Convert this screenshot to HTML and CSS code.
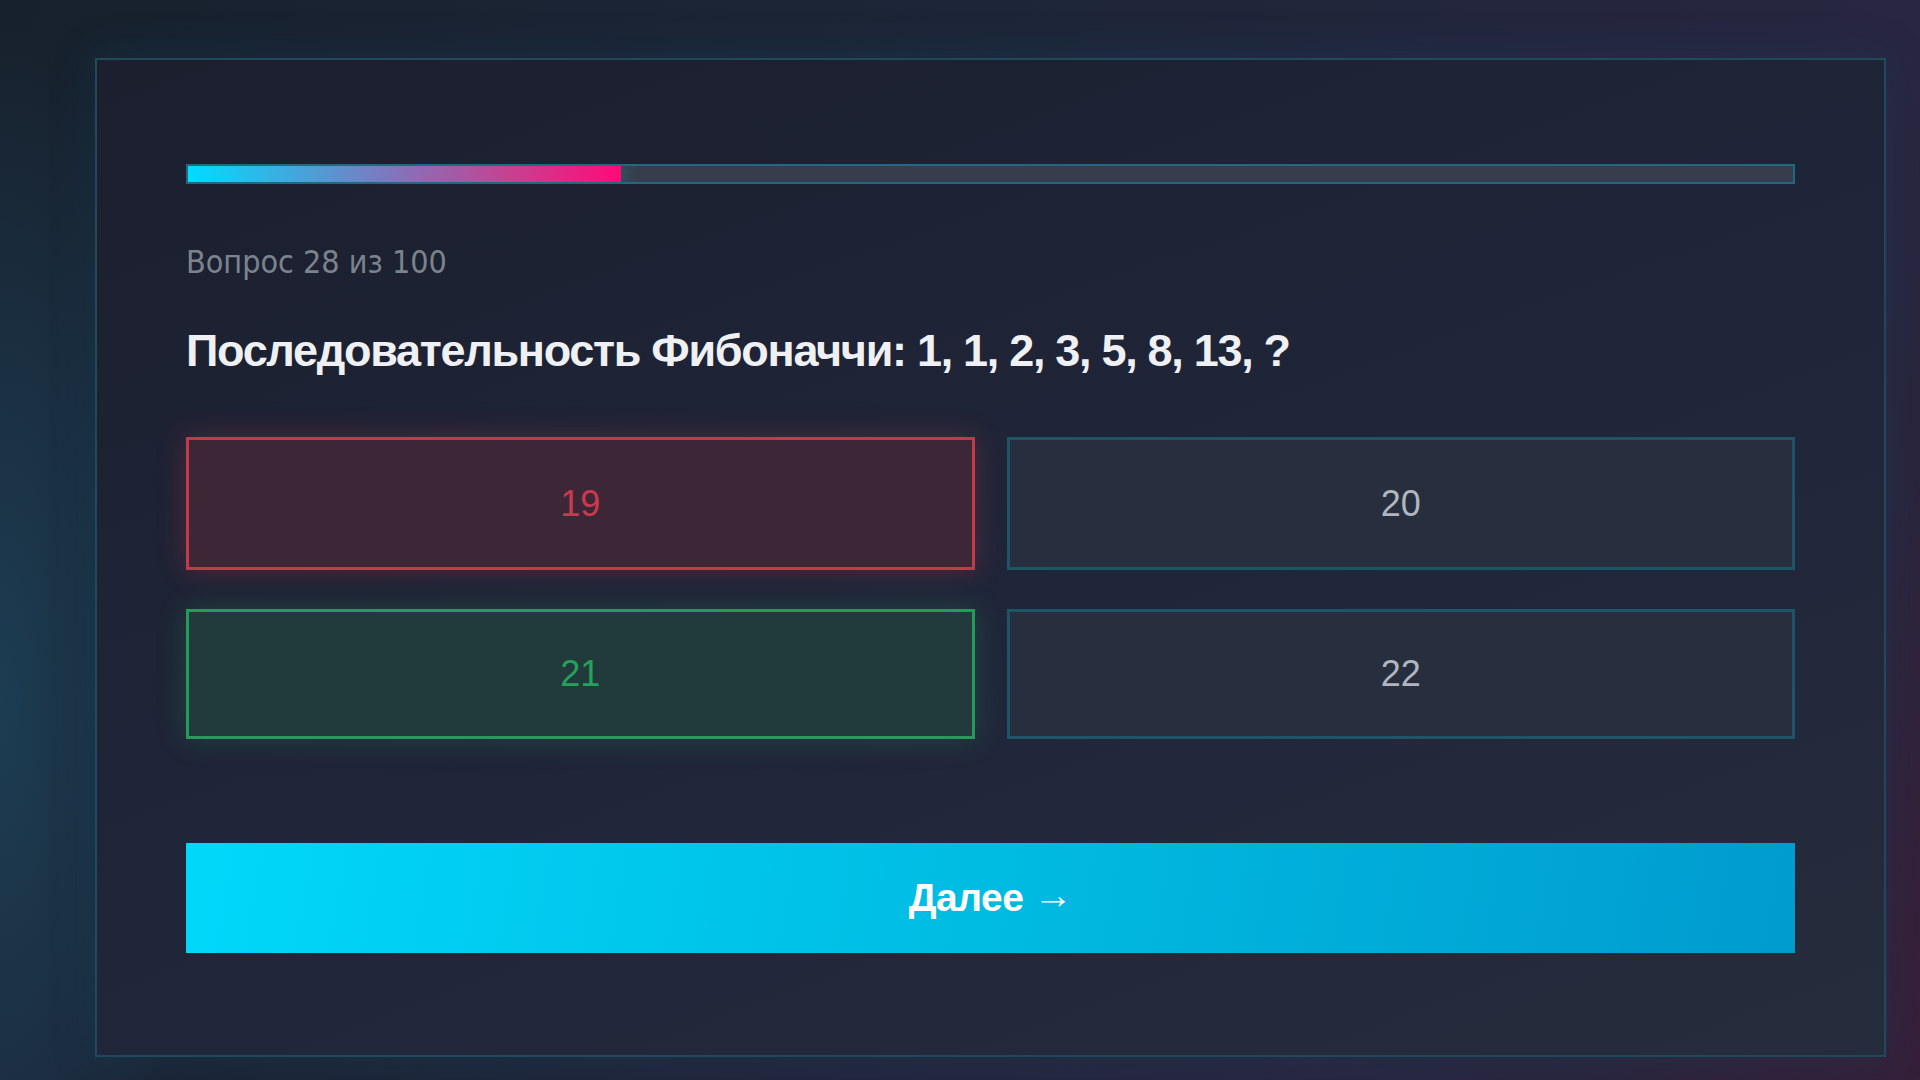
FILE: index.html
```html
<!DOCTYPE html>
<html lang="ru">
<head>
  <meta charset="UTF-8">
  <meta name="viewport" content="width=device-width, initial-scale=1.0">
  <title>Квиз</title>
  <link rel="stylesheet" href="styles.css">
</head>
<body>
  <div class="quiz">
    <div class="progress">
      <div class="progress-fill" style="width: 27%"></div>
    </div>

    <div class="counter">Вопрос 28 из 100</div>
    <h1 class="question">Последовательность Фибоначчи: 1, 1, 2, 3, 5, 8, 13, ?</h1>

    <div class="options">
      <button class="option wrong">19</button>
      <button class="option">20</button>
      <button class="option correct">21</button>
      <button class="option">22</button>
    </div>

    <button class="next">Далее <span class="arrow">→</span></button>
  </div>
</body>
</html>
```

FILE: styles.css
```css
* {
  box-sizing: border-box;
}
html, body {
  height: 100%;
}
body {
  margin: 0;
  padding: 58px 34px 23px 95px;
  font-family: "Liberation Sans", Arial, sans-serif;
  background:
    radial-gradient(ellipse 260px 900px at 0% 65%, rgba(30, 78, 105, 0.6), transparent 75%),
    radial-gradient(ellipse 500px 700px at 100% 90%, rgba(62, 28, 58, 0.6), transparent 70%),
    linear-gradient(120deg, #17212d 0%, #1d2638 40%, #282640 75%, #2c2338 100%);
  overflow: hidden;
}
.quiz {
  height: 999px;
  padding: 104px 89px 102px;
  border: 2px solid #1e4a5c;
  background: linear-gradient(160deg, #1b1f2e 0%, #20263a 55%, #252c3b 100%);
  box-shadow: 0 0 40px rgba(20, 80, 110, 0.25);
  display: flex;
  flex-direction: column;
}
.progress {
  height: 20px;
  border: 2px solid #1f6a80;
  background: #363e4d;
  overflow: hidden;
}
.progress-fill {
  height: 100%;
  background: linear-gradient(90deg, #00dcff 0%, #7a7ac0 45%, #c8408f 75%, #ff0a78 100%);
  box-shadow: 4px 0 14px rgba(40, 120, 140, 0.6);
}
.counter {
  margin-top: 58px;
  font-family: "DejaVu Sans Condensed", "DejaVu Sans", sans-serif;
  font-size: 32px;
  line-height: 40px;
  color: #7b838d;
}
.question {
  margin: 41px 0 0;
  font-size: 45px;
  line-height: 56px;
  font-weight: bold;
  letter-spacing: -1.3px;
  color: #eef0f4;
}
.options {
  margin-top: 58px;
  display: grid;
  grid-template-columns: 1fr 1fr;
  grid-template-rows: 133px 130px;
  gap: 39px 32px;
}
.option {
  font-family: inherit;
  font-size: 36px;
  color: #b0b5be;
  background: #272f3e;
  border: 3px solid #1e5468;
  cursor: pointer;
}
.option.wrong {
  color: #c93a4c;
  background: #3d2737;
  border-color: #c23b4b;
  box-shadow: 0 0 26px rgba(194, 59, 75, 0.3);
}
.option.correct {
  color: #27a05a;
  background: #213b3d;
  border-color: #27995a;
  box-shadow: 0 0 26px rgba(39, 153, 90, 0.28);
}
.next {
  margin-top: 104px;
  height: 110px;
  font-family: inherit;
  font-size: 39px;
  font-weight: bold;
  letter-spacing: -0.5px;
  color: #fff;
  border: none;
  background: linear-gradient(100deg, #00d8fa 0%, #00bbe2 50%, #009bce 100%);
  cursor: pointer;
}
.next .arrow {
  display: inline-block;
  font-weight: normal;
  transform: translateY(-3px);
}
```
